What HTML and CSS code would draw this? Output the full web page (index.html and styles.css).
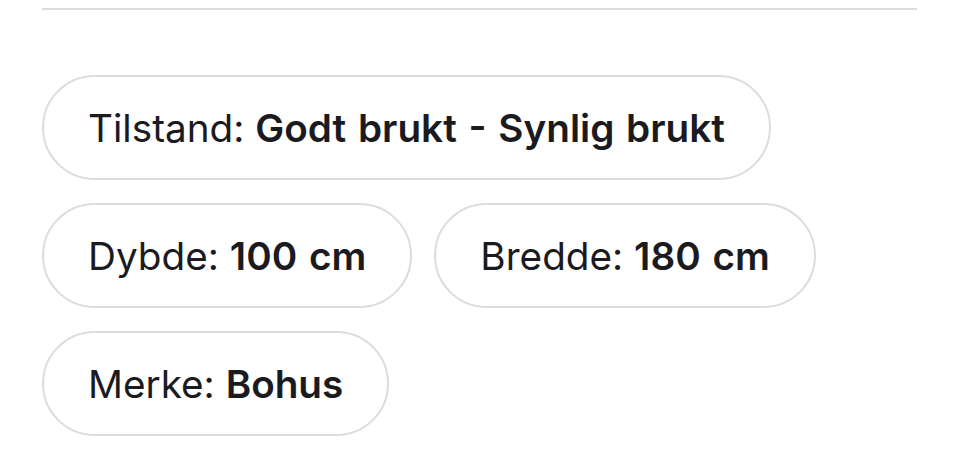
FILE: index.html
```html
<!DOCTYPE html>
<html lang="no">
<head>
  <meta charset="UTF-8" />
  <meta name="viewport" content="width=device-width, initial-scale=1.0"/>
  <title>Egenskaper</title>
  <link rel="stylesheet" href="styles.css">
</head>
<body>

<div class="container">
  <hr class="divider">

  <div class="specs">
    <div class="pill">Tilstand: <b>Godt brukt - Synlig brukt</b></div>
    <div class="pill">Dybde: <b>100 cm</b></div>
    <div class="pill">Bredde: <b>180 cm</b></div>
    <div class="pill">Merke: <b>Bohus</b></div>
  </div>
</div>

</body>
</html>
```

FILE: styles.css
```css
body {
  margin: 0;
  font-family: Inter, 'Noto Sans', sans-serif;
  background: #fff;
  color: #1b1b1f;
}
.container {
  padding: 8px 43px 0 42px;
}
.divider {
  margin: 0;
  border: none;
  height: 2px;
  background: #dcdce0;
}
.specs {
  display: flex;
  flex-wrap: wrap;
  gap: 23px 22px;
  margin-top: 65px;
  padding-right: 100px;
}
.pill {
  border: 2px solid #dcdcdf;
  border-radius: 60px;
  padding: 0 44px;
  height: 101px;
  display: flex;
  align-items: center;
  font-size: 38.7px;
  font-weight: 400;
  white-space: pre;
}
.pill b {
  font-weight: 600;
  word-spacing: 2px;
}
```
